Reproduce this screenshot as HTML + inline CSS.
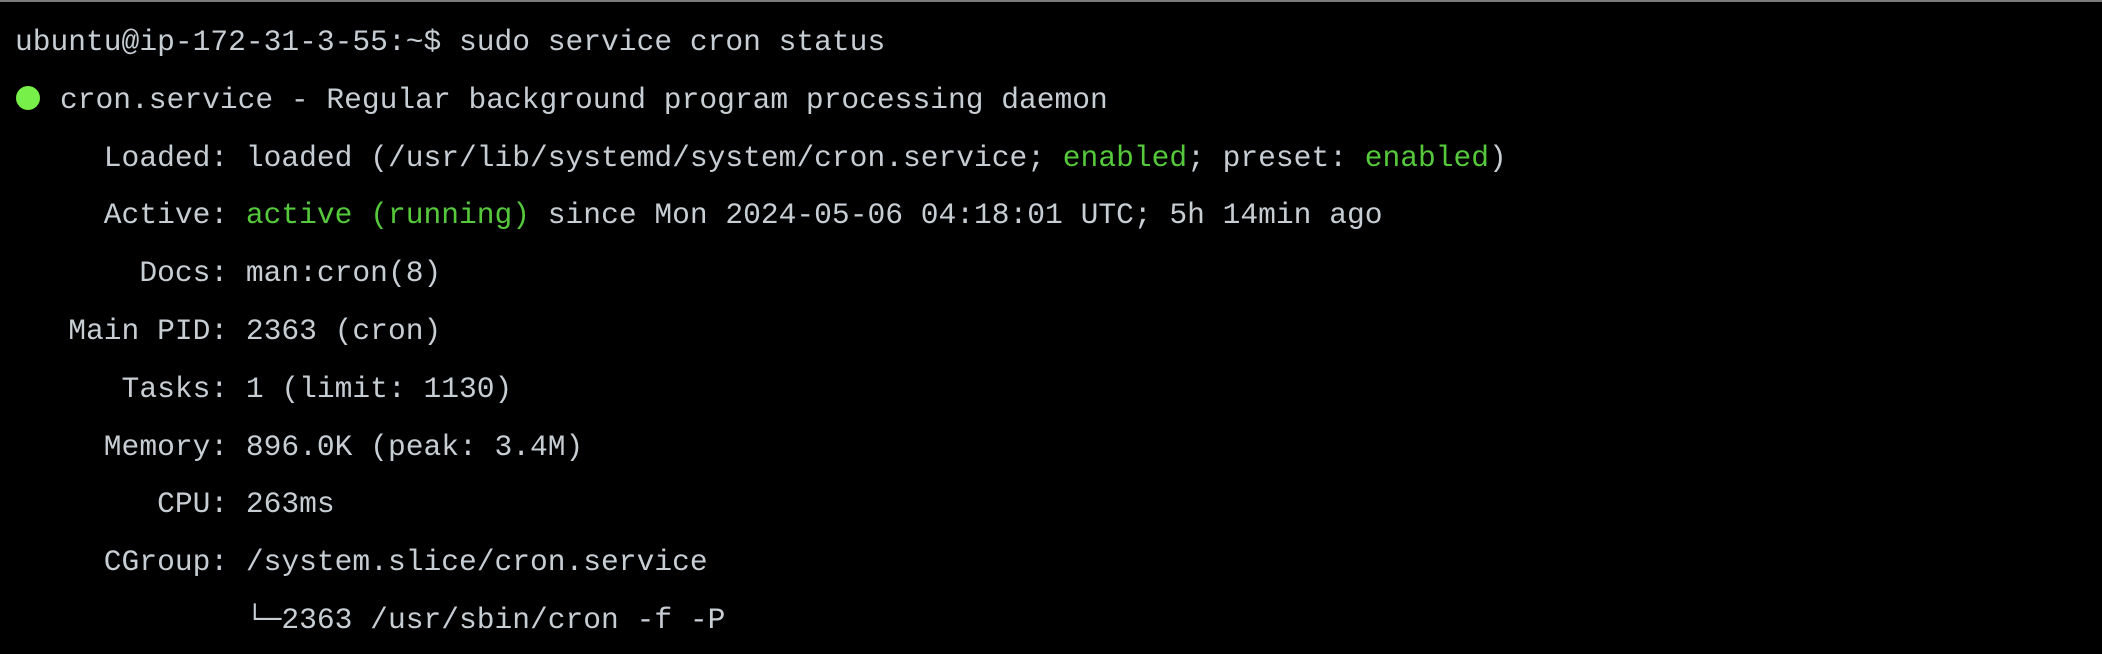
<!DOCTYPE html>
<html><head><style>
html,body{margin:0;padding:0;background:#000;width:2102px;height:654px;overflow:hidden}
.t{position:absolute;left:0;top:0;width:2102px;height:2px;background:#7a7a7a}
pre{position:absolute;left:15px;top:14px;margin:0;font-family:"Liberation Mono","DejaVu Sans Mono",monospace;font-size:29.6px;line-height:57.8px;color:#c6cdd3}
.g{color:#55c83b}
.d{display:inline-block;width:45px;position:relative}
.d:before{content:"";position:absolute;left:1px;top:-22px;width:24px;height:24px;border-radius:50%;background:#78f04a}
</style></head><body><div class="t"></div>
<pre>ubuntu@ip-172-31-3-55:~$ sudo service cron status
<span class="d"></span>cron.service - Regular background program processing daemon
     Loaded: loaded (/usr/lib/systemd/system/cron.service; <span class="g">enabled</span>; preset: <span class="g">enabled</span>)
     Active: <span class="g">active (running)</span> since Mon 2024-05-06 04:18:01 UTC; 5h 14min ago
       Docs: man:cron(8)
   Main PID: 2363 (cron)
      Tasks: 1 (limit: 1130)
     Memory: 896.0K (peak: 3.4M)
        CPU: 263ms
     CGroup: /system.slice/cron.service
             └─2363 /usr/sbin/cron -f -P</pre>
</body></html>
